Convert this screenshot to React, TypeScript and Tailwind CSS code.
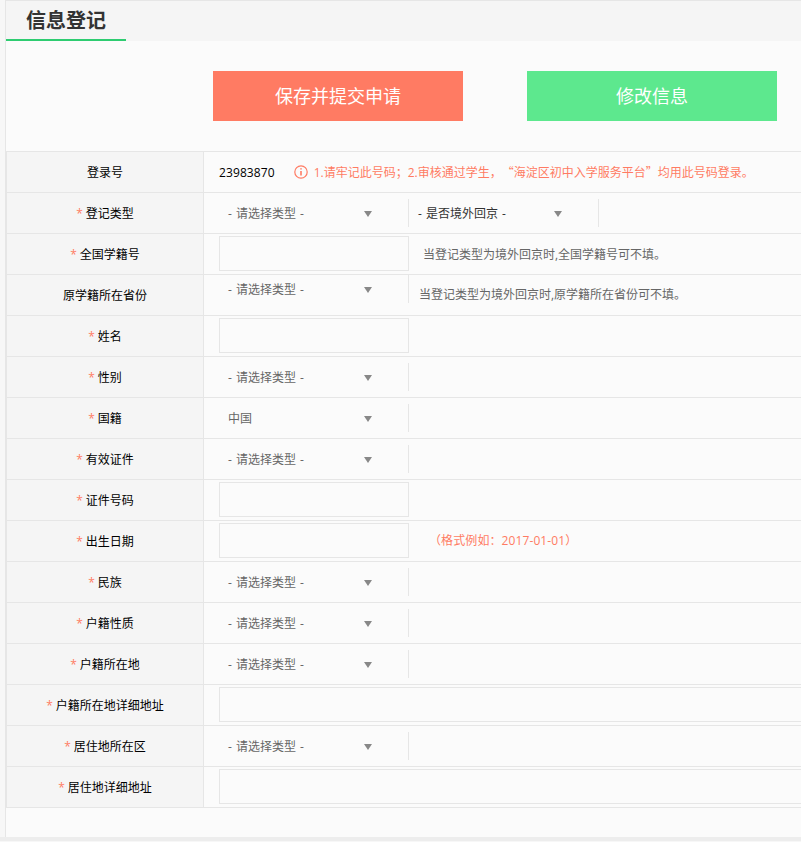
import { ReactNode } from "react"

const CJK = "font-['Open_Sans','Noto_Sans_CJK_SC',sans-serif]"

function Select({ text = "- 请选择类型 -", dark = false, top = false }: { text?: string; dark?: boolean; top?: boolean }) {
  return (
    <div
      className={`flex h-7 w-[190px] items-center justify-between border-r border-[#e6e6e6] pl-[9px] pr-[36px] ${top ? "self-start" : ""}`}
    >
      <span className={`pt-0.5 [word-spacing:1px] ${dark ? "text-[#333]" : "text-[#666]"}`}>{text}</span>
      <span className="mt-0.5 h-0 w-0 border-x-[4px] border-t-[6px] border-x-transparent border-t-[#888]" />
    </div>
  )
}

function Input({ wide = false }: { wide?: boolean }) {
  return (
    <div
      className={
        wide
          ? "mb-px h-[35px] flex-1 border border-r-0 border-[#e6e6e6]"
          : "mb-px h-[35px] w-[190px] border border-[#e6e6e6]"
      }
    />
  )
}

function Row({ label, required = true, children }: { label: string; required?: boolean; children?: ReactNode }) {
  return (
    <div className="flex h-[41px] border-b border-[#e6e6e6]">
      <div className="flex w-[197px] shrink-0 items-center justify-center border-r border-[#e6e6e6] bg-[#f5f5f5] pt-px text-black">
        {required && <span className="mr-[3px] text-[#ff7b63]">*</span>}
        {label}
      </div>
      <div className="flex min-w-0 flex-1 items-center pl-[15px]">{children}</div>
    </div>
  )
}

export default function App() {
  return (
    <div className={`h-[842px] w-[801px] overflow-hidden bg-[#f7f7f7] pl-[5px] text-xs ${CJK}`}>
      <div className="h-[837px] border-l border-t border-[#e6e6e6] bg-[#fbfbfb]">
        {/* Header */}
        <div className="h-10 bg-[#f5f5f5]">
          <div className="h-10 w-[120px] border-b-2 border-[#2ecc71] pl-5 text-xl leading-[39px] font-bold text-[#333]">
            信息登记
          </div>
        </div>

        {/* Buttons */}
        <div className="flex gap-16 pt-[30px] pb-[30px] pl-[207px]">
          <button className="h-[50px] w-[250px] bg-[#ff7b63] text-lg text-white">保存并提交申请</button>
          <button className="h-[50px] w-[250px] bg-[#5de88e] text-lg text-white">修改信息</button>
        </div>

        {/* Form */}
        <div className="border-l border-t border-[#e6e6e6]">
          <Row label="登录号" required={false}>
            <span className="pt-px tracking-[0.1px] text-black">23983870</span>
            <svg className="ml-[19px]" width="14" height="14" viewBox="0 0 14 14" fill="none" stroke="#ff7b63">
              <circle cx="7" cy="7" r="6.2" strokeWidth="1.2" />
              <path d="M7 3.2v1.4M7 6v4.6" strokeWidth="1.6" />
            </svg>
            <span className="ml-1.5 pt-px text-[#ff7b63]">
              1.请牢记此号码；2.审核通过学生，
              <span className="ml-1.5 font-['Noto_Sans_CJK_SC',sans-serif]">“</span>
              海淀区初中入学服务平台
              <span className="font-['Noto_Sans_CJK_SC',sans-serif]">”</span>
              均用此号码登录。
            </span>
          </Row>
          <Row label="登记类型">
            <div className="flex">
              <Select />
              <Select text="- 是否境外回京 -" dark />
            </div>
          </Row>
          <Row label="全国学籍号">
            <Input />
            <span className="ml-[14px] pt-px text-[#666]">当登记类型为境外回京时,全国学籍号可不填。</span>
          </Row>
          <Row label="原学籍所在省份" required={false}>
            <Select top />
            <span className="ml-2.5 text-[#666]">当登记类型为境外回京时,原学籍所在省份可不填。</span>
          </Row>
          <Row label="姓名">
            <Input />
          </Row>
          <Row label="性别">
            <Select />
          </Row>
          <Row label="国籍">
            <Select text="中国" />
          </Row>
          <Row label="有效证件">
            <Select />
          </Row>
          <Row label="证件号码">
            <Input />
          </Row>
          <Row label="出生日期">
            <Input />
            <span className="ml-5 tracking-[0.1px] text-[#ff7b63]">（格式例如：2017-01-01）</span>
          </Row>
          <Row label="民族">
            <Select />
          </Row>
          <Row label="户籍性质">
            <Select />
          </Row>
          <Row label="户籍所在地">
            <Select />
          </Row>
          <Row label="户籍所在地详细地址">
            <Input wide />
          </Row>
          <Row label="居住地所在区">
            <Select />
          </Row>
          <Row label="居住地详细地址">
            <Input wide />
          </Row>
        </div>
      </div>
      <div className="-ml-[5px] h-1 bg-[#ededed]" />
    </div>
  )
}
